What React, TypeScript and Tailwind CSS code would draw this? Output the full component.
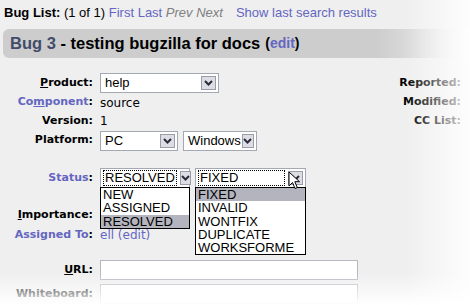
import React from 'react';

const LINK = 'text-[#6466c2]';
const LABEL = "font-['DejaVu_Sans',sans-serif] text-[11px] font-bold";
const CTRL = "font-['Liberation_Sans_Narrow','Liberation_Sans',sans-serif] text-[13px] text-black";

function Chevron() {
  return (
    <svg width="9" height="6" viewBox="0 0 9 6">
      <path d="M1 1 L4.5 4.5 L8 1" fill="none" stroke="#2a2a3a" strokeWidth="2" />
    </svg>
  );
}

function Select({ value, width, focus }: { value: string; width: number; focus?: boolean }) {
  return (
    <div
      className="flex items-center h-[20px] bg-white border border-[#a4a8b4] pl-[3px] pr-[2px] shrink-0"
      style={{ width }}
    >
      <span
        className={`flex-1 ${CTRL} leading-[14px] px-[1px] ${focus ? 'outline-1 outline-dotted outline-black mr-[4px]' : ''}`}
      >
        {value}
      </span>
      <div className="w-[15px] h-[14px] bg-[#dddde5] border border-[#9c9ca8] flex items-center justify-center">
        <Chevron />
      </div>
    </div>
  );
}

function Label({ children, className = '' }: { children: React.ReactNode; className?: string }) {
  return <div className={`w-[95px] text-right pr-[2px] ${LABEL} ${className}`}>{children}</div>;
}

function Row({ h, children, right }: { h: number; children: React.ReactNode; right?: string }) {
  return (
    <div className="flex items-center" style={{ height: h }}>
      <div className="flex items-center gap-[5px] flex-1">{children}</div>
      {right && <div className={`${LABEL} text-black pr-[9px]`}>{right}</div>}
    </div>
  );
}

function List({ items, sel, width }: { items: string[]; sel: number; width: number }) {
  return (
    <div className="absolute left-0 top-[19px] bg-white border border-black z-10" style={{ width }}>
      {items.map((it, i) => (
        <div key={it} className={`${CTRL} leading-[13.3px] h-[13.3px] px-[2px] ${i === sel ? 'bg-[#b4b4be]' : ''}`}>
          {it}
        </div>
      ))}
    </div>
  );
}

export default function App() {
  return (
    <div className="relative w-[470px] h-[305px] overflow-hidden bg-[#efefef]">
      <div className="pt-[5px] px-[4px] font-['Liberation_Sans',Arial,sans-serif] text-[13px] leading-[16px] whitespace-nowrap">
        <b>Bug List:</b> (1 of 1) <span className={LINK}>First</span> <span className={LINK}>Last</span>{' '}
        <i className="text-[#808080]">Prev</i> <i className="text-[#808080]">Next</i>
        <span className={`${LINK} ml-[13px]`}>Show last search results</span>
      </div>

      <div className="ml-[3px] mt-[8px] h-[29px] rounded-l-[6px] bg-gradient-to-r from-[#cdcdcd] from-80% to-[#f4f4f4] flex items-center pl-[7px] font-['Liberation_Sans',Arial,sans-serif] font-bold whitespace-nowrap">
        <span className="text-[16.5px] text-[#424b6a]">Bug 3</span>
        <span className="text-[16.5px] text-black">&nbsp;- testing bugzilla for docs</span>
        <span className="text-[14px] text-black ml-[5px]">
          (<span className={LINK}>edit</span>)
        </span>
      </div>

      <div className="mt-[15px]">
        <Row h={20} right="Reported:">
          <Label>
            <u>P</u>roduct:
          </Label>
          <Select value="help" width={119} />
        </Row>
        <Row h={19} right="Modified:">
          <Label className={LINK}>
            Co<u>m</u>ponent<span className="text-black">:</span>
          </Label>
          <span className="font-['DejaVu_Sans',sans-serif] text-[12px]">source</span>
        </Row>
        <Row h={18} right="CC List:">
          <Label>Version:</Label>
          <span className="font-['DejaVu_Sans',sans-serif] text-[12px]">1</span>
        </Row>
        <Row h={21}>
          <Label>Platform:</Label>
          <Select value="PC" width={78} />
          <Select value="Windows" width={74} />
        </Row>

        <div className="mt-[18px]">
          <Row h={18}>
            <Label className={LINK}>
              Status<span className="text-black">:</span>
            </Label>
            <div className="relative">
              <Select value="RESOLVED" width={90} focus />
              <List items={['NEW', 'ASSIGNED', 'RESOLVED']} sel={2} width={90} />
            </div>
            <div className="relative">
              <Select value="FIXED" width={111} focus />
              <List items={['FIXED', 'INVALID', 'WONTFIX', 'DUPLICATE', 'WORKSFORME']} sel={0} width={111} />
              <svg className="absolute left-[93px] top-[3px] z-20" width="13" height="20" viewBox="0 0 13 20">
                <path
                  d="M1 1 L1 15 L4.5 11.5 L7 17.5 L9.3 16.5 L6.8 10.7 L11.5 10.7 Z"
                  fill="#fff"
                  stroke="#000"
                  strokeWidth="1"
                  strokeLinejoin="round"
                />
              </svg>
            </div>
          </Row>
          <Row h={19}>
            <span />
          </Row>
          <Row h={19}>
            <Label>
              <u>I</u>mportance:
            </Label>
            <div className="flex-1" />
          </Row>
          <Row h={20}>
            <Label className={LINK}>
              Assigned To<span className="text-black">:</span>
            </Label>
            <span className={`font-['DejaVu_Sans',sans-serif] text-[12px] ${LINK}`}>ell (edit)</span>
          </Row>
        </div>

        <div className="mt-[15px] flex flex-col gap-[4px]">
          <Row h={20}>
            <Label>
              <u>U</u>RL:
            </Label>
            <div className="w-[258px] h-[20px] bg-white border border-[#b6b9c2]" />
          </Row>
          <Row h={20}>
            <Label>Whiteboard:</Label>
            <div className="w-[258px] h-[20px] bg-white border border-[#b6b9c2]" />
          </Row>
        </div>
      </div>

      <div className="pointer-events-none absolute inset-y-0 right-0 w-[65px] bg-gradient-to-r from-white/0 to-white/90 z-30" />
      <div className="pointer-events-none absolute inset-x-0 bottom-0 h-[32px] bg-gradient-to-b from-white/0 to-white z-30" />
    </div>
  );
}
